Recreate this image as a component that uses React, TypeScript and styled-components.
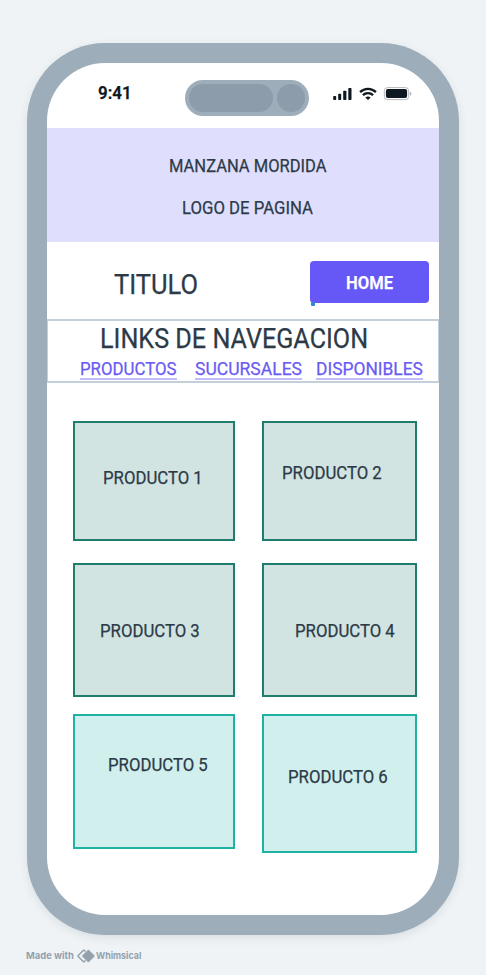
import React from "react";
import styled, { createGlobalStyle } from "styled-components";

const GlobalStyle = createGlobalStyle`
  * { box-sizing: border-box; }
  html, body { margin: 0; padding: 0; background: #eff3f6; }
  body { font-family: Roboto, "Liberation Sans", sans-serif; color: #2c3a47; }
`;

const Board = styled.main`
  width: 486px;
  height: 975px;
  padding: 43px 27px 0;
  overflow: hidden;
  background: #eff3f6;
`;

const Phone = styled.div`
  width: 432px;
  height: 892px;
  padding: 20px;
  border-radius: 78px;
  background: #9dadba;
  box-shadow: 0 3px 10px rgba(40, 55, 70, 0.1);
`;

const Screen = styled.div`
  width: 392px;
  height: 852px;
  border-radius: 58px;
  overflow: hidden;
  background: #fff;
  display: flex;
  flex-direction: column;
`;

const Label = styled.span<{ $size?: number; $squeeze?: number; $weight?: number }>`
  display: block;
  width: max-content;
  white-space: nowrap;
  font-size: ${(p) => p.$size ?? 18}px;
  line-height: ${(p) => (p.$size ?? 18) > 20 ? 30 : 20}px;
  font-weight: ${(p) => p.$weight ?? 400};
  -webkit-text-stroke: 0.25px currentColor;
  transform: scaleX(${(p) => p.$squeeze ?? 0.93});
  transform-origin: 0 0;
`;

const StatusBar = styled.div`
  height: 65px;
  flex: none;
  display: grid;
  grid-template-columns: 138px 124px 1fr;
  align-items: start;
`;

const Clock = styled.div`
  padding: 20px 0 0 50.6px;
  color: #0e1821;
`;

const Island = styled.div`
  height: 36px;
  margin-top: 17px;
  padding: 4px;
  border-radius: 18px;
  background: #9dadba;
  display: flex;
  gap: 4px;
`;

const Sensor = styled.div<{ $width: number }>`
  width: ${(p) => p.$width}px;
  height: 28px;
  border-radius: 14px;
  background: #8c9cab;
`;

const Indicators = styled.svg`
  display: block;
  margin: 23px 0 0 22px;
`;

const Banner = styled.header`
  height: 114px;
  flex: none;
  padding-top: 28px;
  background: #dfdefd;
  display: flex;
  flex-direction: column;
  gap: 22px;
`;

const Inset = styled.div<{ $left: number }>`
  padding-left: ${(p) => p.$left}px;
`;

const TitleRow = styled.section`
  height: 77px;
  flex: none;
  padding: 19px 10px 0 67px;
  display: flex;
  justify-content: space-between;
`;

const TitleText = styled.div`
  padding-top: 9px;
`;

const HomeButton = styled.button`
  position: relative;
  width: 119px;
  height: 42px;
  padding: 2px 0 0 36px;
  border: 0;
  border-radius: 4px;
  background: #6658f6;
  color: #fff;
  font-family: inherit;
`;

const Anchor = styled.i`
  position: absolute;
  left: 1px;
  bottom: -3px;
  width: 4px;
  height: 4px;
  border-radius: 1px;
  background: #2c88d9;
`;

const Nav = styled.nav`
  height: 64px;
  flex: none;
  padding-top: 3px;
  border: solid #c3cfd9;
  border-width: 2px 1px;
`;

const Links = styled.div`
  display: flex;
  padding: 5px 0 0 32px;
`;

const NavLink = styled.a<{ $width: number; $gap: number }>`
  width: ${(p) => p.$width}px;
  height: 21px;
  margin-right: ${(p) => p.$gap}px;
  border-bottom: 2px solid #c1bcfb;
  color: #6a5bf3;
`;

const Products = styled.section`
  display: flex;
  padding: 38px 22px 0 26px;
  gap: 27px;
`;

const Column = styled.div<{ $width: number }>`
  width: ${(p) => p.$width}px;
  display: flex;
  flex-direction: column;
`;

const Card = styled.article<{ $height: number; $gap: number; $x: number; $y: number; $bright?: boolean }>`
  height: ${(p) => p.$height}px;
  flex: none;
  margin-bottom: ${(p) => p.$gap}px;
  padding: ${(p) => p.$y}px 0 0 ${(p) => p.$x}px;
  border: 2px solid ${(p) => (p.$bright ? "#1fb2a2" : "#207d6d")};
  background: ${(p) => (p.$bright ? "#d1efed" : "#d1e4e1")};
`;

const Credit = styled.footer`
  height: 14px;
  margin: 14px 0 0 -1.5px;
  display: flex;
  align-items: center;
  font: 700 9.5px/14px Inter, "Liberation Sans", sans-serif;
  color: #93a1ad;
`;

const CreditText = styled.span<{ $width: number; $squeeze: number }>`
  width: ${(p) => p.$width}px;
  white-space: nowrap;
  transform: scaleX(${(p) => p.$squeeze});
  transform-origin: 0 0;
`;

const links = [
  { name: "PRODUCTOS", width: 97, gap: 18, squeeze: 0.934 },
  { name: "SUCURSALES", width: 107, gap: 14, squeeze: 0.974 },
  { name: "DISPONIBLES", width: 107, gap: 0, squeeze: 0.966 },
];

const columns = [
  {
    width: 162,
    cards: [
      { name: "PRODUCTO 1", height: 120, gap: 22, x: 27.5, y: 45 },
      { name: "PRODUCTO 3", height: 134, gap: 17, x: 24.5, y: 56 },
      { name: "PRODUCTO 5", height: 135, gap: 0, x: 32.5, y: 39, bright: true },
    ],
  },
  {
    width: 155,
    cards: [
      { name: "PRODUCTO 2", height: 120, gap: 22, x: 17.5, y: 40 },
      { name: "PRODUCTO 4", height: 134, gap: 17, x: 30.5, y: 56 },
      { name: "PRODUCTO 6", height: 139, gap: 0, x: 23.5, y: 51, bright: true },
    ],
  },
];

export default function App() {
  return (
    <>
      <GlobalStyle />
      <Board>
        <Phone>
          <Screen>
            <StatusBar>
              <Clock><Label $weight={600} $squeeze={0.94}>9:41</Label></Clock>
              <Island>
                <Sensor $width={84} />
                <Sensor $width={28} />
              </Island>
              <Indicators width="82" height="16" viewBox="0 0 82 16">
                <g fill="#0e1821">
                  <rect x="2.2" y="10" width="3" height="4" rx="0.8" />
                  <rect x="7.2" y="7.7" width="3" height="6.3" rx="0.8" />
                  <rect x="12.2" y="4.7" width="3.2" height="9.3" rx="0.8" />
                  <rect x="17.3" y="2" width="3.2" height="12" rx="0.8" />
                </g>
                <g fill="none" stroke="#0e1821" strokeWidth="2.4">
                  <path d="M29.1 6.1 C33.5 1.8 40.5 1.8 44.9 6.1" />
                  <path d="M31.9 9.2 C34.8 6.4 39.2 6.4 42.1 9.2" />
                </g>
                <path d="M34.4 11.5 C36 10.1 38 10.1 39.6 11.5 L37 14 Z" fill="#0e1821" />
                <rect x="53.3" y="1.6" width="24.4" height="12" rx="3.2" fill="none" stroke="#b5b6ba" />
                <rect x="54.9" y="3.1" width="21.2" height="9" rx="2" fill="#0e1821" />
                <path d="M78.9 5.7 C81 6.2 81 9.2 78.9 9.7 Z" fill="#b5b6ba" />
              </Indicators>
            </StatusBar>
            <Banner>
              <Inset $left={121.5}><Label $squeeze={0.918}>MANZANA MORDIDA</Label></Inset>
              <Inset $left={134.5}><Label>LOGO DE PAGINA</Label></Inset>
            </Banner>
            <TitleRow>
              <TitleText><Label $size={27} $squeeze={0.945}>TITULO</Label></TitleText>
              <HomeButton>
                <Label $weight={600} $squeeze={0.92}>HOME</Label>
                <Anchor />
              </HomeButton>
            </TitleRow>
            <Nav>
              <Inset $left={52}><Label $size={27} $squeeze={0.932}>LINKS DE NAVEGACION</Label></Inset>
              <Links>
                {links.map((l) => (
                  <NavLink key={l.name} $width={l.width} $gap={l.gap}>
                    <Label $squeeze={l.squeeze}>{l.name}</Label>
                  </NavLink>
                ))}
              </Links>
            </Nav>
            <Products>
              {columns.map((column) => (
                <Column key={column.width} $width={column.width}>
                  {column.cards.map((c) => (
                    <Card key={c.name} $height={c.height} $gap={c.gap} $x={c.x} $y={c.y} $bright={c.bright}>
                      <Label>{c.name}</Label>
                    </Card>
                  ))}
                </Column>
              ))}
            </Products>
          </Screen>
        </Phone>
        <Credit>
          <CreditText $width={51.5} $squeeze={0.99}>Made with</CreditText>
          <svg width="19" height="14" viewBox="0 0 19 14">
            <path d="M6.2 1.4 L1.2 6.4 Q.6 7 1.2 7.6 L6.2 12.6 Q6.8 13.1 7.4 12.6 L12.4 7.6 Q13 7 12.4 6.4 L7.4 1.4 Q6.8 .9 6.2 1.4 Z" fill="none" stroke="#93a1ad" strokeWidth="1.4" />
            <path d="M10.5 1 L5.1 6.2 Q4.4 7 5.1 7.8 L10.5 13 Q11.4 13.8 12.3 13 L17.7 7.8 Q18.4 7 17.7 6.2 L12.3 1 Q11.4 .2 10.5 1 Z" fill="#93a1ad" stroke="#eff3f6" strokeWidth="0.7" />
          </svg>
          <CreditText $width={50} $squeeze={0.93}>Whimsical</CreditText>
        </Credit>
      </Board>
    </>
  );
}
